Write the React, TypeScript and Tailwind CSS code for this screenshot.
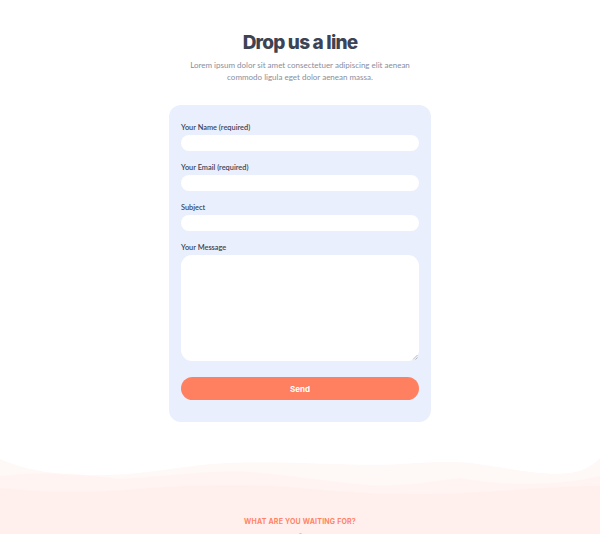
import React from "react";

function Field({ label, tall }: { label: string; tall?: boolean }) {
  return (
    <div className="flex flex-col">
      <label className="mb-[3px] text-[7.4px] font-semibold leading-[9px] text-[#3b4354]">
        {label}
      </label>
      {tall ? (
        <div className="relative">
          <textarea className="block h-[106px] w-full resize-none rounded-[11px] bg-white outline-none" />
          <svg
            viewBox="0 0 6 6"
            className="absolute bottom-[1px] right-[1px] h-[6px] w-[6px]"
          >
            <path d="M1 5.5 L5.5 1 M3.5 5.5 L5.5 3.5" stroke="#9a9ca4" strokeWidth="0.7" />
          </svg>
        </div>
      ) : (
        <input className="block h-[16px] w-full rounded-full bg-white outline-none" />
      )}
    </div>
  );
}

function Waves() {
  return (
    <svg
      viewBox="0 0 600 60"
      preserveAspectRatio="none"
      className="block h-[60px] w-full"
    >
      <path
        d="M0 13 C30 26 60 29 100 29 C150 29 180 19 230 17 C300 15 360 21 400 18 C430 16 450 15 470 17 C510 22 540 30 570 27 C585 25 595 18 600 12 L600 60 L0 60 Z"
        fill="#fef8f7"
      />
      <path
        d="M0 30 C40 25 80 28 120 33 C170 30 210 24 250 26 C290 29 330 36 370 39 C410 41 440 34 460 32 C500 40 560 40 600 30 L600 60 L0 60 Z"
        fill="#fff4f2"
      />
      <path
        d="M0 42 C60 48 100 46 150 42 C200 38 260 38 300 42 C360 48 420 50 480 46 C530 43 570 40 600 40 L600 60 L0 60 Z"
        fill="#fff0ed"
      />
    </svg>
  );
}

export default function App() {
  return (
    <div className="h-[534px] w-[600px] overflow-hidden bg-white font-['Lato',sans-serif]">
      <section className="flex flex-col items-center pt-[32px]">
        <h2 className="font-['Inter',sans-serif] text-[19px] font-extrabold leading-[22px] tracking-[-0.8px] text-[#3b4354]">
          Drop us a line
        </h2>
        <p className="mt-[5px] w-[240px] text-center text-[8px] leading-[12px] text-[#898e9c]">
          Lorem ipsum dolor sit amet consectetuer adipiscing elit aenean
          commodo ligula eget dolor aenean massa.
        </p>

        <form className="mt-[22px] flex w-[262px] flex-col gap-[12px] rounded-[12px] bg-[#eaeffd] px-[12px] pb-[22px] pt-[18px]">
          <Field label="Your Name (required)" />
          <Field label="Your Email (required)" />
          <Field label="Subject" />
          <Field label="Your Message" tall />
          <button
            type="button"
            className="mt-[4px] h-[23px] w-full rounded-full bg-[#ff7f61] font-['Inter',sans-serif] text-[8px] font-bold text-white"
          >
            Send
          </button>
        </form>
      </section>

      <div className="mt-[24px]">
        <Waves />
        <div className="flex h-[60px] flex-col items-center bg-[#fff0ed] pt-[11px]">
          <p className="font-['Inter',sans-serif] text-[7px] font-bold leading-[9px] tracking-[0.2px] text-[#ff8466]">
            WHAT ARE YOU WAITING FOR?
          </p>
          <span className="mt-[7px] h-[3px] w-[3px] rounded-full bg-[#c8c8cc]" />
        </div>
      </div>
    </div>
  );
}
